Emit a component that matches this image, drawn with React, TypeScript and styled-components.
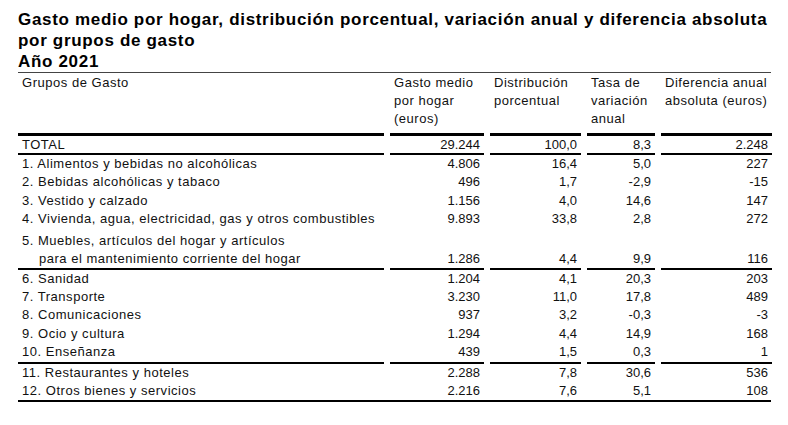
import React from 'react';
import styled, { createGlobalStyle } from 'styled-components';

const GlobalStyle = createGlobalStyle`
  html, body {
    margin: 0;
    padding: 0;
    background: #ffffff;
  }
  body {
    font-family: 'Liberation Sans', Arial, sans-serif;
    color: #111111;
  }
`;

const COLUMNS = '366px 94px 91px 68px 111px';

const Page = styled.div`
  width: 753px;
  padding: 9px 0 0 18px;
`;

const Title = styled.h1`
  margin: 0;
  font-size: 17px;
  line-height: 21px;
  font-weight: 700;
  letter-spacing: 0.04em;
  color: #000;
  white-space: nowrap;
  border-bottom: 1px solid #444;
`;

const Table = styled.div`
  border-bottom: 2px solid #000;
`;

const Row = styled.div<{ $lh: number; $padTop?: number }>`
  display: grid;
  grid-template-columns: ${COLUMNS};
  column-gap: 6px;
  font-size: 13px;
  line-height: ${({ $lh }) => $lh}px;
  padding-top: ${({ $padTop = 0 }) => $padTop}px;
`;

const Cell = styled.div<{ $rule?: number; $num?: boolean; $padBottom?: number }>`
  display: flex;
  flex-direction: column;
  justify-content: ${({ $num }) => ($num ? 'flex-end' : 'flex-start')};
  text-align: ${({ $num }) => ($num ? 'right' : 'left')};
  letter-spacing: ${({ $num }) => ($num ? '0' : '0.04em')};
  padding: 0 4px ${({ $padBottom = 0 }) => $padBottom}px 4px;
  white-space: nowrap;
  border-bottom: ${({ $rule = 0 }) => ($rule ? `${$rule}px solid #000` : 'none')};
`;

const Continued = styled.span`
  padding-left: 17px;
`;

type DataRow = {
  label: string[];
  values: string[];
  rule?: boolean;
};

const headers = [
  ['Gasto medio', 'por hogar', '(euros)'],
  ['Distribución', 'porcentual'],
  ['Tasa de', 'variación', 'anual'],
  ['Diferencia anual', 'absoluta (euros)'],
];

const rows: DataRow[] = [
  { label: ['1. Alimentos y bebidas no alcohólicas'], values: ['4.806', '16,4', '5,0', '227'] },
  { label: ['2. Bebidas alcohólicas y tabaco'], values: ['496', '1,7', '-2,9', '-15'] },
  { label: ['3. Vestido y calzado'], values: ['1.156', '4,0', '14,6', '147'] },
  { label: ['4. Vivienda, agua, electricidad, gas y otros combustibles'], values: ['9.893', '33,8', '2,8', '272'] },
  {
    label: ['5. Muebles, artículos del hogar y artículos', 'para el mantenimiento corriente del hogar'],
    values: ['1.286', '4,4', '9,9', '116'],
    rule: true,
  },
  { label: ['6. Sanidad'], values: ['1.204', '4,1', '20,3', '203'] },
  { label: ['7. Transporte'], values: ['3.230', '11,0', '17,8', '489'] },
  { label: ['8. Comunicaciones'], values: ['937', '3,2', '-0,3', '-3'] },
  { label: ['9. Ocio y cultura'], values: ['1.294', '4,4', '14,9', '168'] },
  { label: ['10. Enseñanza'], values: ['439', '1,5', '0,3', '1'], rule: true },
  { label: ['11. Restaurantes y hoteles'], values: ['2.288', '7,8', '30,6', '536'] },
  { label: ['12. Otros bienes y servicios'], values: ['2.216', '7,6', '5,1', '108'] },
];

const totals = ['29.244', '100,0', '8,3', '2.248'];

export default function App() {
  return (
    <>
      <GlobalStyle />
      <Page>
        <Title>
          Gasto medio por hogar, distribución porcentual, variación anual y diferencia absoluta
          <br />
          por grupos de gasto
          <br />
          Año 2021
        </Title>
        <Table>
          <Row $lh={18} $padTop={1}>
            <Cell $rule={3} $padBottom={5}>Grupos de Gasto</Cell>
            {headers.map((lines) => (
              <Cell key={lines[0]} $rule={3} $padBottom={5}>
                {lines.map((line) => (
                  <span key={line}>{line}</span>
                ))}
              </Cell>
            ))}
          </Row>
          <Row $lh={16} $padTop={1}>
            <Cell $rule={2}>TOTAL</Cell>
            {totals.map((v, i) => (
              <Cell key={i} $num $rule={2}>
                {v}
              </Cell>
            ))}
          </Row>
          {rows.map((row) => {
            const multi = row.label.length > 1;
            return (
              <Row key={row.label[0]} $lh={multi ? 18 : 18.4} $padTop={multi ? 3 : 0}>
                <Cell $rule={row.rule ? 2 : 0}>
                  {row.label.map((line, i) =>
                    i === 0 ? <span key={line}>{line}</span> : <Continued key={line}>{line}</Continued>
                  )}
                </Cell>
                {row.values.map((v, i) => (
                  <Cell key={i} $num $rule={row.rule ? 2 : 0}>
                    {v}
                  </Cell>
                ))}
              </Row>
            );
          })}
        </Table>
      </Page>
    </>
  );
}
